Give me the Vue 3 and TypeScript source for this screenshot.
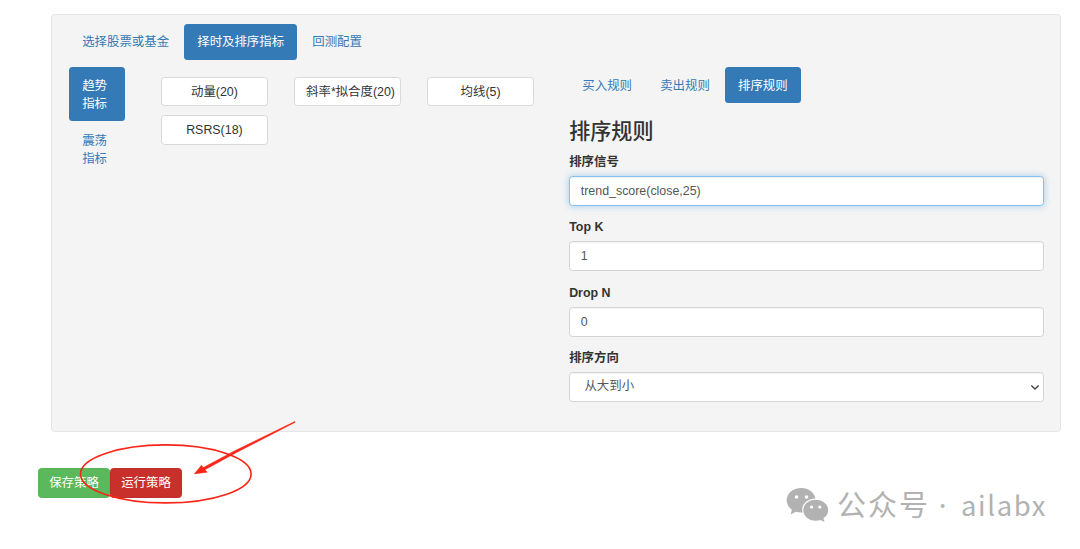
<script setup lang="ts">
import { ref } from 'vue'

const steps = ['选择股票或基金', '择时及排序指标', '回测配置']
const groups = ['趋势指标', '震荡指标']
const indicators = ['动量(20)', '斜率*拟合度(20)', '均线(5)', 'RSRS(18)']
const rules = ['买入规则', '卖出规则', '排序规则']

const step = ref(1)
const group = ref(0)
const rule = ref(2)
const signal = ref('trend_score(close,25)')
const topK = ref('1')
const dropN = ref('0')
</script>

<template>
  <div class="page">
    <main class="panel">
      <nav class="pills">
        <button v-for="(s, i) in steps" :key="s" class="pill" :class="{ active: step === i }" @click="step = i">{{ s }}</button>
      </nav>
      <div class="columns">
        <nav class="side">
          <button v-for="(g, i) in groups" :key="g" class="pill tall" :class="{ active: group === i }" @click="group = i">{{ g }}</button>
        </nav>
        <section class="indicators">
          <button v-for="n in indicators" :key="n" class="indicator">{{ n }}</button>
        </section>
        <section class="rules">
          <nav class="pills">
            <button v-for="(r, i) in rules" :key="r" class="pill" :class="{ active: rule === i }" @click="rule = i">{{ r }}</button>
          </nav>
          <h3>排序规则</h3>
          <label class="field"><span>排序信号</span><input v-model="signal" class="control focused" /></label>
          <label class="field"><span>Top K</span><input v-model="topK" class="control" /></label>
          <label class="field"><span>Drop N</span><input v-model="dropN" class="control" /></label>
          <div class="field">
            <span>排序方向</span>
            <div class="control select">
              从大到小
              <svg width="10" height="7" viewBox="0 0 10 7"><path d="M1.3 1.5 5 5 8.7 1.5" fill="none" stroke="#444" stroke-width="1.4" /></svg>
            </div>
          </div>
        </section>
      </div>
    </main>
    <footer class="actions">
      <button class="btn save">保存策略</button><button class="btn run">运行策略</button>
    </footer>
    <svg class="mark" width="230" height="100" viewBox="0 0 230 100">
      <ellipse cx="95.8" cy="58.9" rx="85.3" ry="29" fill="none" stroke="#fb2416" stroke-width="1.6" />
      <path d="M225.2 7.2 165 38.2 134.8 54.8 137.2 57.2 124.4 58.8 131.6 50.2 133 52.8 164 36.2 224.8 6.6Z" fill="#fb2416" stroke="#fb2416" stroke-width=".6" />
    </svg>
    <div class="watermark">
      <svg width="44" height="36" viewBox="0 0 44 36">
        <path fill="#b2b2b2" d="M15.3 1C7 1 .7 6.4.7 13.3c0 4 2 7.2 5.2 9.4L4.7 27.6l5.4-2.8c2 .6 4.3.8 6.5.6-2-7.4 4.1-13.6 12.8-13.9C28.3 5.2 22.5 1 15.3 1Z" />
        <path fill="#b2b2b2" d="M29.7 12.7c-7 0-12.4 4.7-12.4 10.5s5.4 10.5 12.4 10.5c1.8 0 3.2-.3 4.7-.8l4.2 2.1-1.2-3.7c3-2 4.8-4.7 4.8-8.1 0-5.8-5.5-10.5-12.5-10.5Z" />
        <g fill="#fff"><circle cx="10.5" cy="10" r="1.8" /><circle cx="20.5" cy="10" r="1.8" /><circle cx="25.6" cy="20" r="1.6" /><circle cx="33.8" cy="20" r="1.6" /></g>
      </svg>
      <span class="account">公众号</span><span class="dot">·</span><span class="name">ailabx</span>
    </div>
  </div>
</template>

<style>
body { margin: 0; background: #fff; }
</style>

<style scoped>
.page, .page * { box-sizing: border-box; }
.page {
  position: relative;
  width: 1080px;
  height: 549px;
  padding: 14px 19px 0 51px;
  overflow: hidden;
  color: #333;
  font: 12.42px/17.75px "Liberation Sans", "Noto Sans CJK SC", sans-serif;
}
button, input { font: inherit; margin: 0; }
.panel {
  height: 418px;
  padding: 9px 16.5px 0 17px;
  background: #f4f4f4;
  border: 1px solid #e5e5e5;
  border-radius: 3.5px;
}
.pills { display: flex; gap: 1.8px; }
.pill {
  height: 35.5px;
  padding: 2px 13.2px 0;
  border: 0;
  border-radius: 3.5px;
  background: none;
  color: #337ab7;
  white-space: nowrap;
}
.pill.active { background: #337ab7; color: #fff; }
.columns { display: flex; margin-top: 7.9px; }
.rules .pill { padding-top: 3px; }
.side { display: flex; flex-direction: column; gap: 1.8px; width: 56.5px; }
.pill.tall { height: 53.3px; padding-top: 3px; white-space: normal; text-align: left; }
.indicators {
  display: grid;
  grid-template-columns: repeat(3, 106.5px);
  grid-auto-rows: 29.7px;
  column-gap: 26.6px;
  row-gap: 8.6px;
  align-content: start;
  margin: 9.3px 0 0 35.7px;
}
.indicator {
  padding: 2px 10.8px 0;
  border: 1px solid #d9d9d9;
  border-radius: 3.5px;
  background: #fff;
  color: #333;
  white-space: nowrap;
}
.rules { width: 474.5px; margin-left: 35.3px; }
h3 {
  height: 24px;
  margin: 16.8px 0 10.3px;
  font-size: 21.1px;
  line-height: 24px;
  font-weight: 500;
}
.field { display: block; margin-bottom: 13.8px; }
.field > span { display: block; height: 21.7px; font-weight: 700; }
.control {
  display: block;
  width: 100%;
  height: 30px;
  padding: 0 10.6px;
  border: 1px solid #d4d4d4;
  border-radius: 3.5px;
  background: #fff;
  box-shadow: inset 0 1px 1px rgba(0, 0, 0, .05);
  color: #555;
  outline: none;
}
.control.focused {
  border-color: #86bfee;
  box-shadow: inset 0 1px 1px rgba(0, 0, 0, .05), 0 0 7px rgba(102, 175, 233, .6);
}
.select { display: flex; align-items: center; justify-content: space-between; padding: 0 3px 0 14.3px; }
.select svg { margin-top: 1px; }
.actions { display: flex; margin: 35.7px 0 0 -13px; }
.btn {
  width: 72px;
  height: 30px;
  padding: 2px 0 0;
  border: 1px solid #57b457;
  border-radius: 3.5px;
  background: #5cb85c;
  color: #fff;
}
.btn.run { border-color: #bf2e2a; background: #c9302c; }
.mark { position: absolute; left: 70px; top: 415px; }
.watermark {
  position: absolute;
  left: 786px;
  top: 486px;
  display: flex;
  align-items: center;
  height: 38px;
  color: #b2b2b2;
  font: 29px/38px "Noto Sans CJK SC", sans-serif;
  white-space: nowrap;
}
.account { margin: -4px 0 0 7px; letter-spacing: 2px; }
.dot { width: 25px; text-align: center; font-family: "Noto Sans", sans-serif; }
.name { margin: -2px 0 0 6px; font-size: 27.5px; letter-spacing: 1.6px; }
</style>
